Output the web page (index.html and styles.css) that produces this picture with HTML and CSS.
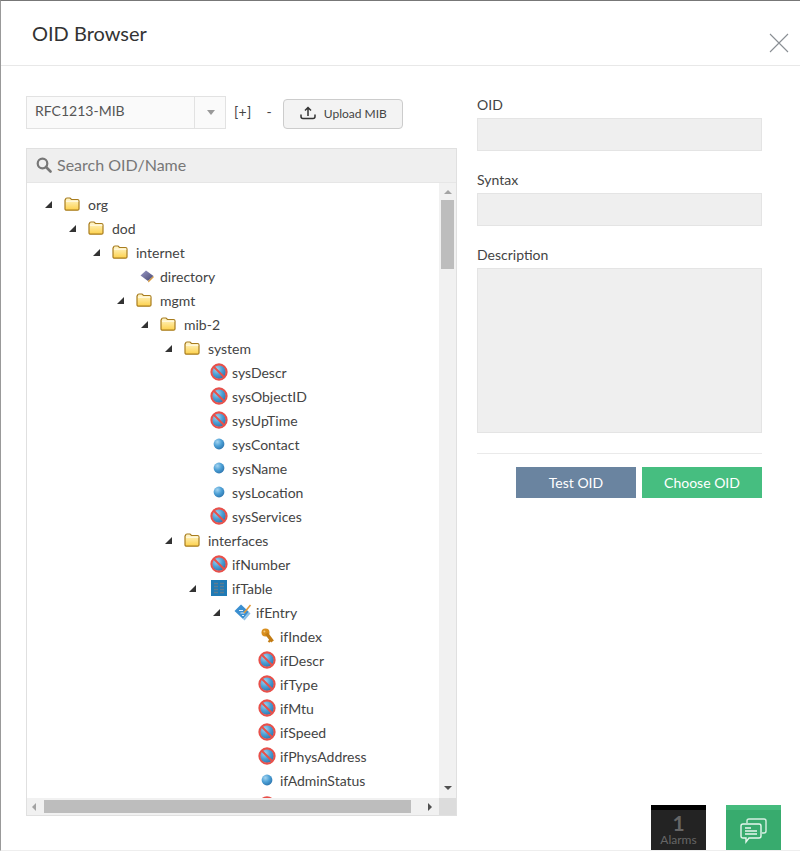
FILE: index.html
```html
<!DOCTYPE html>
<html lang="en">
<head>
<meta charset="utf-8">
<title>OID Browser</title>
<link rel="stylesheet" href="styles.css">
</head>
<body>
<svg class="defs" width="0" height="0" aria-hidden="true">
  <defs>
    <linearGradient id="gf" x1="0" y1="0" x2="0" y2="1"><stop offset="0" stop-color="#fff8d0"/><stop offset="1" stop-color="#fdd04a"/></linearGradient>
    <radialGradient id="gb" cx=".35" cy=".3" r=".8"><stop offset="0" stop-color="#a4d4f0"/><stop offset=".5" stop-color="#4b9fd5"/><stop offset="1" stop-color="#2a6fa8"/></radialGradient>
    <linearGradient id="gk" x1="0" y1="0" x2="1" y2="1"><stop offset="0" stop-color="#9a9ac8"/><stop offset="1" stop-color="#45456e"/></linearGradient>
    <symbol id="i-folder" viewBox="0 0 16 14">
      <path d="M1.5 2.5 Q1.5 1 3 1 H6 L7.5 2.5 H13.5 Q15 2.5 15 4 V12 Q15 13.2 13.5 13.2 H3 Q1 13.2 1 12 V3 Z" fill="url(#gf)" stroke="#a87c1e" stroke-width="1.2"/>
      <path d="M2 4.2 H14.4" stroke="#fff" stroke-width=".8"/>
    </symbol>
    <symbol id="i-no" viewBox="0 0 18 18">
      <circle cx="9" cy="9" r="7" fill="url(#gb)"/>
      <circle cx="9" cy="9" r="7.6" fill="none" stroke="#e8504a" stroke-width="2.1"/>
      <path d="M4 4 L14 14" stroke="#e8504a" stroke-width="1.9"/>
    </symbol>
    <symbol id="i-dot" viewBox="0 0 12 12"><circle cx="6" cy="6" r="5.4" fill="url(#gb)"/></symbol>
    <symbol id="i-dir" viewBox="0 0 14 13">
      <path d="M0.5 5.5 L6 0.5 L13.5 6 L8 11 Z" fill="url(#gk)"/>
      <path d="M8 11 L13.5 6 V7.5 L8.5 12.5 Z" fill="#d99a3a"/>
    </symbol>
    <symbol id="i-table" viewBox="0 0 16 16">
      <rect width="16" height="16" fill="#1f7ab5"/>
      <path d="M3 3.5 H7 M9 3.5 H13 M3 6.5 H7 M9 6.5 H13 M3 9.5 H7 M9 9.5 H13 M3 12.5 H7 M9 12.5 H13" stroke="#5d7d92" stroke-width="1.6"/>
    </symbol>
    <symbol id="i-entry" viewBox="0 0 18 18">
      <path d="M0.5 8 L7 1.5 L15 9 L9 16 Z" fill="#3b8fd0"/>
      <path d="M5 7.5 H9 M6.5 10 H10.5 M8 12.5 H10" stroke="#dff0fb" stroke-width="1.2"/>
      <path d="M9 16 L15 9 L16.5 10.5 L10.5 17.5 Z" fill="#8cc0e6"/>
      <path d="M10 10 L16.5 2" stroke="#e39a3a" stroke-width="1.6"/>
    </symbol>
    <symbol id="i-key" viewBox="0 0 13 16">
      <circle cx="4.5" cy="4.5" r="4" fill="#d98f1f"/>
      <circle cx="3.4" cy="3.4" r="1" fill="#f2cc80"/>
      <path d="M5.5 5.5 L11.5 13.5" stroke="#c27c14" stroke-width="3.4"/>
      <path d="M9.5 12 L7.5 14" stroke="#c27c14" stroke-width="2.2"/>
    </symbol>
  </defs>
</svg>

<div class="modal">
  <header class="modal-head">
    <h1 class="modal-title">OID Browser</h1>
    <svg class="close" viewBox="0 0 20 20" width="20" height="20" aria-label="Close"><path d="M1 1 L19 19 M19 1 L1 19" stroke="#8a8f94" stroke-width="1.1" fill="none"/></svg>
  </header>

  <main class="modal-body">
    <section class="left">
      <div class="toolbar">
        <div class="select">
          <span class="select-value">RFC1213-MIB</span>
          <span class="select-btn"><span class="caret"></span></span>
        </div>
        <span class="expand">[+]</span>
        <span class="collapse">-</span>
        <button class="upload" type="button">
          <svg viewBox="0 0 16 14" width="16" height="14"><path d="M8 10 V2 M5 4.5 L8 1.5 L11 4.5" stroke="#333" stroke-width="1.5" fill="none"/><path d="M1 8.5 V10.5 Q1 12.5 3 12.5 H13 Q15 12.5 15 10.5 V8.5" stroke="#333" stroke-width="1.5" fill="none"/></svg>
          <span>Upload MIB</span>
        </button>
      </div>

      <div class="panel">
        <div class="search">
          <svg viewBox="0 0 16 16" width="16" height="16"><circle cx="6.5" cy="6.5" r="4.8" fill="none" stroke="#777" stroke-width="2.2"/><path d="M10 10 L14.5 14.5" stroke="#777" stroke-width="2.6" stroke-linecap="round"/></svg>
          <span>Search OID/Name</span>
        </div>
        <div class="tree-wrap">
          <ul class="tree">
            <li class="row l0"><i class="arrow"></i><svg class="ic-folder"><use href="#i-folder"/></svg><span>org</span></li>
            <li class="row l1"><i class="arrow"></i><svg class="ic-folder"><use href="#i-folder"/></svg><span>dod</span></li>
            <li class="row l2"><i class="arrow"></i><svg class="ic-folder"><use href="#i-folder"/></svg><span>internet</span></li>
            <li class="row l3"><i class="noarrow"></i><svg class="ic-dir"><use href="#i-dir"/></svg><span>directory</span></li>
            <li class="row l3"><i class="arrow"></i><svg class="ic-folder"><use href="#i-folder"/></svg><span>mgmt</span></li>
            <li class="row l4"><i class="arrow"></i><svg class="ic-folder"><use href="#i-folder"/></svg><span>mib-2</span></li>
            <li class="row l5"><i class="arrow"></i><svg class="ic-folder"><use href="#i-folder"/></svg><span>system</span></li>
            <li class="row l6"><i class="noarrow"></i><svg class="ic-no"><use href="#i-no"/></svg><span>sysDescr</span></li>
            <li class="row l6"><i class="noarrow"></i><svg class="ic-no"><use href="#i-no"/></svg><span>sysObjectID</span></li>
            <li class="row l6"><i class="noarrow"></i><svg class="ic-no"><use href="#i-no"/></svg><span>sysUpTime</span></li>
            <li class="row l6"><i class="noarrow"></i><svg class="ic-dot"><use href="#i-dot"/></svg><span>sysContact</span></li>
            <li class="row l6"><i class="noarrow"></i><svg class="ic-dot"><use href="#i-dot"/></svg><span>sysName</span></li>
            <li class="row l6"><i class="noarrow"></i><svg class="ic-dot"><use href="#i-dot"/></svg><span>sysLocation</span></li>
            <li class="row l6"><i class="noarrow"></i><svg class="ic-no"><use href="#i-no"/></svg><span>sysServices</span></li>
            <li class="row l5"><i class="arrow"></i><svg class="ic-folder"><use href="#i-folder"/></svg><span>interfaces</span></li>
            <li class="row l6"><i class="noarrow"></i><svg class="ic-no"><use href="#i-no"/></svg><span>ifNumber</span></li>
            <li class="row l6"><i class="arrow"></i><svg class="ic-table"><use href="#i-table"/></svg><span>ifTable</span></li>
            <li class="row l7"><i class="arrow"></i><svg class="ic-entry"><use href="#i-entry"/></svg><span>ifEntry</span></li>
            <li class="row l8"><i class="noarrow"></i><svg class="ic-key"><use href="#i-key"/></svg><span>ifIndex</span></li>
            <li class="row l8"><i class="noarrow"></i><svg class="ic-no"><use href="#i-no"/></svg><span>ifDescr</span></li>
            <li class="row l8"><i class="noarrow"></i><svg class="ic-no"><use href="#i-no"/></svg><span>ifType</span></li>
            <li class="row l8"><i class="noarrow"></i><svg class="ic-no"><use href="#i-no"/></svg><span>ifMtu</span></li>
            <li class="row l8"><i class="noarrow"></i><svg class="ic-no"><use href="#i-no"/></svg><span>ifSpeed</span></li>
            <li class="row l8"><i class="noarrow"></i><svg class="ic-no"><use href="#i-no"/></svg><span>ifPhysAddress</span></li>
            <li class="row l8"><i class="noarrow"></i><svg class="ic-dot"><use href="#i-dot"/></svg><span>ifAdminStatus</span></li>
            <li class="row l8"><i class="noarrow"></i><svg class="ic-no ic-clipped"><use href="#i-no"/></svg></li>
          </ul>
          <div class="vscroll" aria-hidden="true">
            <i class="tri tri-up"></i>
            <div class="vthumb"></div>
            <i class="tri tri-down"></i>
          </div>
          <div class="hscroll" aria-hidden="true">
            <i class="tri tri-left"></i>
            <div class="hthumb"></div>
            <i class="tri tri-right"></i>
          </div>
          <div class="corner" aria-hidden="true"></div>
        </div>
      </div>
    </section>

    <section class="right">
      <label class="field-label">OID</label>
      <div class="field"></div>
      <label class="field-label">Syntax</label>
      <div class="field"></div>
      <label class="field-label">Description</label>
      <div class="field field-area"></div>
      <hr class="rule">
      <div class="actions">
        <button class="btn btn-test" type="button">Test OID</button>
        <button class="btn btn-choose" type="button">Choose OID</button>
      </div>
    </section>
  </main>
</div>

<div class="alarm-widget">
  <strong>1</strong>
  <span>Alarms</span>
</div>
<div class="chat-widget">
  <svg viewBox="0 0 28 28" width="28" height="28">
    <path d="M7 6 V4 Q7 2 9 2 H24 Q26 2 26 4 V14 Q26 16 24 16 H22" fill="none" stroke="#d6f0e2" stroke-width="1.4"/>
    <path d="M3 7 H19 Q21 7 21 9 V19 Q21 21 19 21 H9 L6 25 V21 H3 Q1 21 1 19 V9 Q1 7 3 7 Z" fill="#38ab6e" stroke="#e6f7ee" stroke-width="1.4"/>
    <path d="M5 11 H11 M5 14 H17 M5 17 H17" stroke="#e6f7ee" stroke-width="1.3"/>
  </svg>
</div>
</body>
</html>
```

FILE: styles.css
```css
* { box-sizing: border-box; }
html, body { margin: 0; padding: 0; height: 100%; }
body {
  font-family: Lato, "Open Sans", sans-serif;
  color: #444;
  background: #fff;
  overflow: hidden;
}
.defs { display: block; height: 0; }
.modal {
  height: 851px;
  border-top: 1px solid #777;
  border-left: 1px solid #999;
  border-bottom: 1px solid #eee;
  background: #fff;
}
.modal-head {
  height: 65px;
  border-bottom: 1px solid #e8e8e8;
  padding: 20px 11px 0 31px;
  display: flex;
  justify-content: space-between;
}
.modal-title {
  margin: 0;
  font-size: 20px;
  font-weight: 400;
  line-height: 24px;
  color: #333;
}
.close { margin-top: 12px; }
.modal-body {
  display: flex;
  padding: 30px 38px 0 25px;
  gap: 20px;
}
.left { width: 431px; }
.toolbar {
  display: flex;
  align-items: flex-end;
  height: 33px;
}
.select {
  width: 200px;
  height: 33px;
  display: flex;
  border: 1px solid #e2e2e2;
  background: #fafafa;
}
.select-value {
  flex: 1;
  font-size: 14px;
  line-height: 28px;
  padding-left: 8px;
  color: #555;
  border-right: 1px solid #e2e2e2;
}
.select-btn {
  width: 30px;
  display: flex;
  align-items: center;
  justify-content: center;
  padding-left: 2px;
}
.caret {
  width: 0;
  height: 0;
  border-left: 4px solid transparent;
  border-right: 4px solid transparent;
  border-top: 5px solid #999;
}
.expand, .collapse {
  font-size: 14px;
  line-height: 20px;
  color: #444;
  align-self: flex-start;
  margin-top: 6px;
}
.expand { margin-left: 8px; letter-spacing: .3px; }
.collapse { margin-left: 15px; }
.upload {
  margin-left: 11px;
  width: 120px;
  height: 30px;
  display: flex;
  align-items: center;
  flex: none;
  padding: 0 0 2px 16px;
  gap: 8px;
  font-family: inherit;
  font-size: 12px;
  color: #444;
  background: #f3f3f3;
  border: 1px solid #ccc;
  border-radius: 4px;
}
.panel {
  margin-top: 19px;
  width: 431px;
  height: 668px;
  border: 1px solid #e0e0e0;
  display: flex;
  flex-direction: column;
}
.search {
  height: 34px;
  flex: none;
  background: #efefef;
  border-bottom: 1px solid #e6e6e6;
  display: flex;
  align-items: center;
  gap: 5px;
  padding: 0 0 2px 9px;
  font-size: 16px;
  color: #777;
}
.tree-wrap {
  flex: 1;
  min-height: 0;
  display: grid;
  grid-template-columns: 412px 17px;
  grid-template-rows: 615px 17px;
}
.tree {
  list-style: none;
  margin: 0;
  padding: 9px 0 0;
  overflow: hidden;
}
.row {
  height: 24px;
  display: flex;
  align-items: center;
  font-size: 14px;
  color: #444;
}
.l0 { padding-left: 18px; }
.l1 { padding-left: 42px; }
.l2 { padding-left: 66px; }
.l3 { padding-left: 90px; }
.l4 { padding-left: 114px; }
.l5 { padding-left: 138px; }
.l6 { padding-left: 162px; }
.l7 { padding-left: 186px; }
.l8 { padding-left: 210px; }
.arrow, .noarrow { width: 19px; flex: none; }
.arrow::before {
  content: "";
  display: block;
  width: 0;
  height: 0;
  margin-left: 0;
  border-left: 7px solid transparent;
  border-bottom: 7px solid #333;
}
.row svg { flex: none; display: block; }
.ic-folder { width: 16px; height: 14px; margin-right: 8px; }
.ic-no { width: 18px; height: 18px; margin: 0 4px 0 2px; }
.row .ic-clipped { margin-top: 2px; }
.ic-dot { width: 12px; height: 12px; margin: 0 7px 0 5px; }
.ic-dir { width: 14px; height: 13px; margin: 0 6px 0 4px; }
.ic-table { width: 16px; height: 16px; margin: 0 5px 0 3px; }
.ic-entry { width: 18px; height: 18px; margin: 0 4px 0 2px; }
.ic-key { width: 13px; height: 16px; margin: 0 6px 0 5px; }
.vscroll {
  background: #f1f1f1;
  display: flex;
  flex-direction: column;
  align-items: center;
  padding-top: 7px;
}
.vthumb {
  width: 13px;
  height: 69px;
  background: #bdbdbd;
  margin-top: 6px;
  margin-bottom: auto;
}
.hscroll {
  background: #f1f1f1;
  display: flex;
  align-items: center;
  padding: 0 7px 0 5px;
}
.hthumb {
  width: 367px;
  height: 13px;
  background: #bdbdbd;
  margin-left: 8px;
  margin-right: auto;
}
.corner { background: #dcdcdc; }
.tri { display: block; width: 0; height: 0; flex: none; }
.tri-up { border-left: 4px solid transparent; border-right: 4px solid transparent; border-bottom: 4px solid #a3a3a3; }
.tri-down { border-left: 4px solid transparent; border-right: 4px solid transparent; border-top: 4px solid #505050; margin-bottom: 8px; }
.tri-left { border-top: 4px solid transparent; border-bottom: 4px solid transparent; border-right: 4px solid #a3a3a3; }
.tri-right { border-top: 4px solid transparent; border-bottom: 4px solid transparent; border-left: 4px solid #505050; }
.right { width: 285px; }
.field-label {
  display: block;
  font-size: 14px;
  line-height: 18px;
  color: #444;
  height: 22px;
}
.field {
  height: 33px;
  background: #efefef;
  border: 1px solid #e4e4e4;
  margin-bottom: 20px;
}
.field-area { height: 165px; margin-bottom: 0; }
.rule {
  margin: 20px 0 13px;
  border: 0;
  border-top: 1px solid #eaeaea;
}
.actions {
  display: flex;
  justify-content: flex-end;
  gap: 6px;
}
.btn {
  width: 120px;
  height: 31px;
  border: 0;
  color: #fff;
  font-family: inherit;
  font-size: 14px;
}
.btn-test { background: #6a84a0; }
.btn-choose { background: #46be80; }
.alarm-widget, .chat-widget {
  position: absolute;
  top: 805px;
  width: 55px;
  height: 45px;
}
.alarm-widget {
  left: 651px;
  background: #232323;
  border-top: 5px solid #000;
  color: #666;
  text-align: center;
}
.alarm-widget strong {
  display: block;
  font-size: 21px;
  line-height: 21px;
  margin-top: 2px;
}
.alarm-widget span {
  display: block;
  font-size: 12px;
  line-height: 14px;
}
.chat-widget {
  left: 726px;
  background: #38ab6e;
  border-top: 5px solid #45bb7d;
  display: flex;
  align-items: center;
  justify-content: center;
  padding-top: 1px;
}
```
